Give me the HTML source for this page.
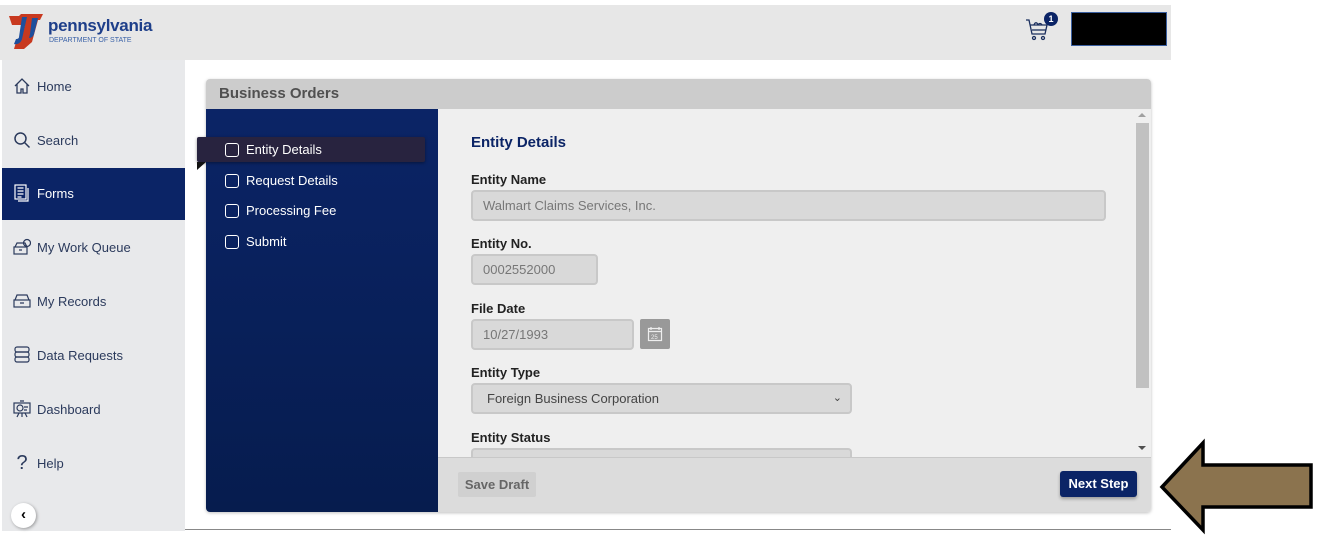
<!DOCTYPE html>
<html><head><meta charset="utf-8"><style>
*{box-sizing:border-box;margin:0;padding:0}
body{width:1317px;height:536px;background:#fff;position:relative;overflow:hidden;font-family:"Liberation Sans",sans-serif}
.a{position:absolute}
.nav{left:13px;font-size:13px;color:#2b3a5c;display:flex;align-items:center;gap:6px}
.nav svg{width:18px;height:18px}
.step{position:absolute;left:225px;color:#fff;font-size:13px;display:flex;align-items:center;gap:7px}
.cb{width:14px;height:14px;border:1.6px solid #fff;border-radius:3px}
.lbl{position:absolute;left:471px;font-size:13px;font-weight:bold;color:#222}
.inp{position:absolute;left:471px;height:31px;background:#d9d9d9;border:2px solid #c8c8c8;border-radius:4px;font-size:13px;color:#777;padding-left:10px;line-height:27px}
</style></head><body>
<div class="a" style="left:0;top:5px;width:1171px;height:55px;background:#e7e7e7"></div>
<!-- logo -->
<svg class="a" style="left:9px;top:14px" width="36" height="36" viewBox="0 0 36 36">
<path d="M0 2h10l2-2h22l-3 6-2 0-6 22-8 7H5l3-10 4 2 4-16H3z" fill="#c8391f"/>
<path d="M13 3h5l-5 22c-1 4-5 6-8 5l2-5c2 0 3-1 3-2z" fill="#1e4f9c"/>
<path d="M23 4h6l-4 16c-1 3-3 4-5 4l1-4z" fill="#1e4f9c"/>
</svg>
<div class="a" style="left:48px;top:16px;font-size:17px;font-weight:bold;color:#1e3f8a;letter-spacing:-0.3px">pennsylvania</div>
<div class="a" style="left:49px;top:37px;font-size:7px;color:#3a62a8">DEPARTMENT OF STATE</div>
<!-- cart -->
<svg class="a" style="left:1025px;top:17px" width="26" height="26" viewBox="0 0 26 26" fill="none" stroke="#1b2f5e" stroke-width="1.3">
<path d="M1 3h3l3 14h13l2-9H5"/><path d="M7 13h14"/><circle cx="9" cy="21" r="1.5"/><circle cx="18" cy="21" r="1.5"/><path d="M9 8c1-3 3-3 4 0M13 8c1-2 3-2 4 0"/>
</svg>
<div class="a" style="left:1044px;top:12px;width:14px;height:14px;border-radius:50%;background:#0b2466;color:#fff;font-size:9px;font-weight:bold;text-align:center;line-height:14px">1</div>
<div class="a" style="left:1071px;top:12px;width:96px;height:34px;background:#000;border:1.5px solid #3a5fa0"></div>
<!-- sidebar -->
<div class="a" style="left:2px;top:60px;width:183px;height:471px;background:#e8e9eb"></div>
<div class="a" style="left:2px;top:168px;width:183px;height:52px;background:#0b2466"></div>
<div class="a nav" style="top:77px"><svg viewBox="0 0 18 18" fill="none" stroke="#2b3a5c" stroke-width="1.3"><path d="M2 9l7-7 7 7M4 7v9h4v-4h2v4h4V7"/></svg>Home</div>
<div class="a nav" style="top:131px"><svg viewBox="0 0 18 18" fill="none" stroke="#2b3a5c" stroke-width="1.5"><circle cx="7.5" cy="7.5" r="5.5"/><path d="M11.5 11.5l5 5"/></svg>Search</div>
<div class="a nav" style="top:184px;color:#fff"><svg viewBox="0 0 18 18" fill="none" stroke="#fff" stroke-width="1.2"><rect x="2" y="1" width="11" height="14"/><path d="M5 17h10V4M4.5 4h6M4.5 7h6M4.5 10h6M4.5 13h4"/></svg>Forms</div>
<div class="a nav" style="top:238px"><svg viewBox="0 0 18 18" fill="none" stroke="#2b3a5c" stroke-width="1.2"><rect x="1" y="9" width="13" height="7"/><path d="M2 9l2-4h8l2 4M6 12h3"/><circle cx="14" cy="5" r="3.5"/></svg>My Work Queue</div>
<div class="a nav" style="top:292px"><svg viewBox="0 0 18 18" fill="none" stroke="#2b3a5c" stroke-width="1.2"><rect x="1" y="8" width="16" height="7"/><path d="M2 8l2-5h10l2 5M7 11h4"/></svg>My Records</div>
<div class="a nav" style="top:346px"><svg viewBox="0 0 18 18" fill="none" stroke="#2b3a5c" stroke-width="1.2"><rect x="2" y="1" width="14" height="5" rx="2"/><rect x="2" y="6" width="14" height="5" rx="2"/><rect x="2" y="11" width="14" height="5" rx="2"/></svg>Data Requests</div>
<div class="a nav" style="top:400px"><svg viewBox="0 0 18 18" fill="none" stroke="#2b3a5c" stroke-width="1.2"><rect x="1" y="3" width="16" height="10"/><circle cx="7" cy="8" r="3"/><path d="M11 7h4M11 10h3M6 13l-2 4M12 13l2 4M9 13v4M7 1h4"/></svg>Dashboard</div>
<div class="a nav" style="top:452px;font-size:13px"><span style="font-size:20px;width:18px;text-align:center;color:#2b3a5c">?</span>Help</div>
<div class="a" style="left:11px;top:503px;width:25px;height:25px;border-radius:50%;background:#fff;box-shadow:1px 1px 3px rgba(0,0,0,.35);text-align:center;font-size:15px;font-weight:bold;line-height:24px;color:#000">&#8249;</div>
<div class="a" style="left:185px;top:529px;width:986px;height:1px;background:#888"></div>
<!-- card -->
<div class="a" style="left:206px;top:79px;width:945px;height:433px;border-radius:4px;overflow:hidden;box-shadow:0 1px 3px rgba(0,0,0,.25)">
<div class="a" style="left:0;top:0;width:945px;height:30px;background:#cccccc"></div>
<div class="a" style="left:13px;top:6px;font-size:15px;font-weight:bold;color:#505050">Business Orders</div>
<div class="a" style="left:0;top:30px;width:232px;height:403px;background:linear-gradient(180deg,#0b2466,#061c4e)"></div>
<div class="a" style="left:232px;top:30px;width:697px;height:348px;background:#efefef"></div>
<div class="a" style="left:929px;top:30px;width:16px;height:348px;background:#efefef"></div>
<div class="a" style="left:930px;top:44px;width:13px;height:265px;background:#c1c1c1"></div>
<div class="a" style="left:932px;top:34px;width:0;height:0;border-left:4px solid transparent;border-right:4px solid transparent;border-bottom:4px solid #a0a0a0"></div>
<div class="a" style="left:932px;top:367px;width:0;height:0;border-left:4px solid transparent;border-right:4px solid transparent;border-top:4px solid #505050"></div>
<div class="a" style="left:232px;top:378px;width:713px;height:55px;background:#dcdcdc;border-top:1px solid #c8c8c8"></div>
<div class="a" style="left:252px;top:393px;width:78px;height:25px;background:#d0d0d0;border-radius:2px;font-size:13px;font-weight:bold;color:#666;text-align:center;line-height:25px">Save Draft</div>
<div class="a" style="left:854px;top:392px;width:77px;height:26px;background:#0b2466;border-radius:3px;font-size:13px;font-weight:bold;color:#fff;text-align:center;line-height:26px;box-shadow:0 2px 3px rgba(0,0,0,.3)">Next Step</div>
</div>
<div class="a" style="left:197px;top:137px;width:228px;height:25px;background:#28233f;border-radius:2px;box-shadow:0 1px 3px rgba(0,0,0,.4)"></div>
<div class="a" style="left:197px;top:162px;width:0;height:0;border-left:9px solid #111;border-bottom:8px solid transparent"></div>
<div class="step" style="top:142px"><div class="cb"></div>Entity Details</div>
<div class="step" style="top:173px"><div class="cb"></div>Request Details</div>
<div class="step" style="top:203px"><div class="cb"></div>Processing Fee</div>
<div class="step" style="top:234px"><div class="cb"></div>Submit</div>
<!-- form -->
<div class="a" style="left:471px;top:134px;font-size:15px;font-weight:bold;color:#0b2466">Entity Details</div>
<div class="lbl" style="top:172px">Entity Name</div>
<div class="inp" style="top:190px;width:635px">Walmart Claims Services, Inc.</div>
<div class="lbl" style="top:236px">Entity No.</div>
<div class="inp" style="top:254px;width:127px">0002552000</div>
<div class="lbl" style="top:301px">File Date</div>
<div class="inp" style="top:319px;width:163px">10/27/1993</div>
<div class="a" style="left:640px;top:319px;width:30px;height:30px;background:#999;border-radius:2px"></div>
<svg class="a" style="left:647px;top:326px" width="16" height="16" viewBox="0 0 16 16" fill="none" stroke="#eee" stroke-width="1.2"><rect x="1.5" y="2.5" width="13" height="12"/><path d="M1.5 5.5h13M4 1v3M12 1v3"/><text x="4" y="13" font-size="6" fill="#eee" stroke="none" font-family="Liberation Sans">25</text></svg>
<div class="lbl" style="top:365px">Entity Type</div>
<div class="inp" style="top:383px;width:381px;color:#444;font-size:13px;padding-left:14px">Foreign Business Corporation<span style="position:absolute;right:8px;top:0;font-size:11px;color:#444">&#8964;</span></div>
<div class="lbl" style="top:430px">Entity Status</div>
<div class="a" style="left:471px;top:448px;width:381px;height:9px;background:#d9d9d9;border:2px solid #c8c8c8;border-bottom:none;border-radius:4px 4px 0 0"></div>
<!-- arrow -->
<svg class="a" style="left:1155px;top:438px" width="162" height="98" viewBox="1155 438 162 98"><polygon points="1162,487 1203,443 1203,465 1311,465 1311,507 1203,507 1203,530" fill="#8b734e" stroke="#000" stroke-width="3.5" stroke-linejoin="miter"/></svg>
</body></html>
